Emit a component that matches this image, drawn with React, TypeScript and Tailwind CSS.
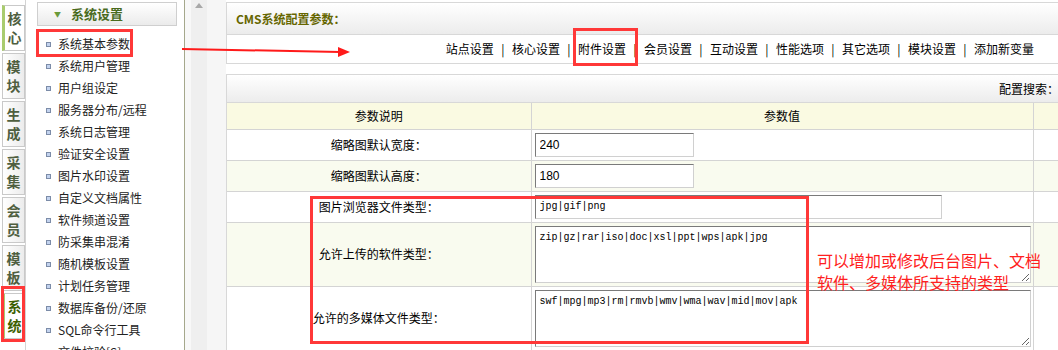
const tabs = ["核心", "模块", "生成", "采集", "会员", "模板", "系统"];

const menu = [
  "系统基本参数",
  "系统用户管理",
  "用户组设定",
  "服务器分布/远程",
  "系统日志管理",
  "验证安全设置",
  "图片水印设置",
  "自定义文档属性",
  "软件频道设置",
  "防采集串混淆",
  "随机模板设置",
  "计划任务管理",
  "数据库备份/还原",
  "SQL命令行工具",
  "文件校验[S]",
];

const navs = ["站点设置", "核心设置", "附件设置", "会员设置", "互动设置", "性能选项", "其它选项", "模块设置", "添加新变量"];

function Tab({ label, active, dark }: { label: string; active?: boolean; dark?: boolean }) {
  return (
    <div
      className={
        "flex h-[46px] w-[23px] flex-col items-center justify-center border border-[#c9c9c9] text-[14px] font-bold leading-[19px] " +
        (active ? "border-l-[3px] border-l-[#a9cc6e] bg-white " : "bg-linear-to-r from-white to-[#ececec] ") +
        (dark ? "text-[#3d6000]" : "text-[#4f5f3f]")
      }
    >
      <span>{label[0]}</span>
      <span>{label[1]}</span>
    </div>
  );
}

function Field({ value, width }: { value: string; width: string }) {
  return (
    <input
      readOnly
      defaultValue={value}
      className={
        width +
        " h-[24px] border border-[#d0d0d0] border-t-[#7a7a7a] border-l-[#7a7a7a] bg-white px-[4px] font-['Liberation_Sans',sans-serif] text-[12px] text-black outline-none"
      }
    />
  );
}

function Area({ value }: { value: string }) {
  return (
    <textarea
      readOnly
      defaultValue={value}
      className="block h-[57px] w-[496px] border border-[#d0d0d0] border-t-[#7a7a7a] border-l-[#7a7a7a] bg-white px-[4px] pt-[4px] font-['Liberation_Mono',monospace] text-[10px] leading-[14px] text-black outline-none"
    />
  );
}

export default function App() {
  return (
    <div className="relative flex h-[350px] w-[1058px] overflow-hidden bg-white font-['Noto_Sans_CJK_SC',sans-serif] text-[12px] text-black">
      {/* tab column */}
      <div className="flex w-[26px] shrink-0 flex-col gap-[2px] border-r border-[#d4d4d4] pl-[2px] pt-[5px]">
        {tabs.map((t, i) => (
          <Tab key={t} label={t} active={i === 0 || i === 6} dark={i === 6} />
        ))}
      </div>

      {/* menu column */}
      <div className="w-[159px] shrink-0 border-r border-[#a5a88c]">
        <div className="ml-[11px] mt-[2px] flex h-[24px] w-[140px] items-center border border-[#cfcfcf] bg-linear-to-b from-white to-[#ebebeb] pl-[16px]">
          <span className="text-[7px] text-[#6a9a3a]">▼</span>
          <span className="ml-[10px] text-[13px] font-bold text-[#4a6b1e]">系统设置</span>
        </div>
        <div className="mt-[7px]">
          {menu.map((m) => (
            <div key={m} className="ml-[20px] flex h-[22px] items-center">
              <span className="h-[5px] w-[5px] border border-[#7c8ca8] bg-[#c3d3ef]" />
              <span className="ml-[7px] text-[#222]">{m}</span>
            </div>
          ))}
        </div>
      </div>

      {/* scrollbar strip */}
      <div className="flex w-[41px] shrink-0">
        <div className="w-[6px] bg-[#f8f8f8]" />
        <div className="flex w-[16px] justify-center bg-[#efefef] pt-[3px]">
          <svg width="8" height="5" viewBox="0 0 8 5">
            <polygon points="4,0 8,5 0,5" fill="#a8a8a8" />
          </svg>
        </div>
        <div className="w-[19px] bg-[#f6f6f6]" />
      </div>

      {/* main */}
      <div className="w-[840px] shrink-0 pt-[2px]">
        <div className="border border-[#d8d8d8]">
          <div className="flex h-[32px] items-center border-b border-[#d8d8d8] bg-linear-to-b from-white to-[#ececec] pl-[9px] font-bold text-[#666600]">
            CMS系统配置参数：
          </div>
          <div className="flex h-[28px] items-center justify-end bg-white pr-[31px]">
            {navs.map((n, i) => (
              <span key={n} className="flex items-center">
                {i > 0 && <span className="w-[18px] text-center">|</span>}
                <span>{n}</span>
              </span>
            ))}
          </div>
        </div>

        <div className="mt-[10px] border border-[#d8d8d8]">
          <div className="flex h-[28px] items-center justify-end border-b border-[#d8d8d8] bg-linear-to-b from-white to-[#ececec] pr-[6px]">
            配置搜索：
          </div>
          <table className="w-full table-fixed border-collapse">
            <colgroup>
              <col className="w-[304px]" />
              <col className="w-[502px]" />
              <col />
            </colgroup>
            <tbody>
              <tr className="h-[26px] bg-[#fafae2]">
                <td className="border-r border-b border-[#d4d4d4] text-center">参数说明</td>
                <td className="border-r border-b border-[#d4d4d4] text-center">参数值</td>
                <td className="border-b border-[#d4d4d4]" />
              </tr>
              <tr className="h-[31px] bg-white">
                <td className="border-r border-b border-[#d4d4d4] text-center">缩略图默认宽度：</td>
                <td className="border-r border-b border-[#d4d4d4] pl-[3px]">
                  <Field value="240" width="w-[159px]" />
                </td>
                <td className="border-b border-[#d4d4d4]" />
              </tr>
              <tr className="h-[31px] bg-[#f9fbef]">
                <td className="border-r border-b border-[#d4d4d4] text-center">缩略图默认高度：</td>
                <td className="border-r border-b border-[#d4d4d4] pl-[3px]">
                  <Field value="180" width="w-[159px]" />
                </td>
                <td className="border-b border-[#d4d4d4]" />
              </tr>
              <tr className="h-[31px] bg-white">
                <td className="border-r border-b border-[#d4d4d4] text-center">图片浏览器文件类型：</td>
                <td className="border-r border-b border-[#d4d4d4] pl-[3px]">
                  <input
                    readOnly
                    defaultValue="jpg|gif|png"
                    className="h-[24px] w-[407px] border border-[#d0d0d0] border-t-[#7a7a7a] border-l-[#7a7a7a] bg-white px-[4px] font-['Liberation_Mono',monospace] text-[10px] text-black outline-none"
                  />
                </td>
                <td className="border-b border-[#d4d4d4]" />
              </tr>
              <tr className="h-[64px] bg-[#f9fbef]">
                <td className="border-r border-b border-[#d4d4d4] text-center">允许上传的软件类型：</td>
                <td className="border-r border-b border-[#d4d4d4] pl-[3px]">
                  <Area value="zip|gz|rar|iso|doc|xsl|ppt|wps|apk|jpg" />
                </td>
                <td className="border-b border-[#d4d4d4]" />
              </tr>
              <tr className="h-[64px] bg-white">
                <td className="border-r border-b border-[#d4d4d4] text-center">允许的多媒体文件类型：</td>
                <td className="border-r border-b border-[#d4d4d4] pl-[3px]">
                  <Area value="swf|mpg|mp3|rm|rmvb|wmv|wma|wav|mid|mov|apk" />
                </td>
                <td className="border-b border-[#d4d4d4]" />
              </tr>
            </tbody>
          </table>
        </div>
      </div>

      {/* annotations */}
      <div className="absolute left-[1px] top-[286px] h-[56px] w-[24px] border-[3px] border-[#ff3838]" />
      <div className="absolute left-[36px] top-[29px] h-[28px] w-[97px] border-[3px] border-[#ff3838]" />
      <div className="absolute left-[573px] top-[28px] h-[38px] w-[65px] border-[3px] border-[#ff3838]" />
      <div className="absolute left-[310px] top-[196px] h-[148px] w-[499px] border-[3px] border-[#ff3838]" />
      <svg className="absolute left-[180px] top-[40px]" width="175" height="20" viewBox="0 0 175 20">
        <line x1="2" y1="9" x2="160" y2="12" stroke="#ff1a1a" strokeWidth="2" />
        <polygon points="158,7 170,12 158,17" fill="#ff1a1a" />
      </svg>
      <div className="absolute left-[817px] top-[249px] text-[16px] leading-[22px] text-[#ff2020]">
        <div>可以增加或修改后台图片、文档</div>
        <div>软件、多媒体所支持的类型</div>
      </div>
    </div>
  );
}
